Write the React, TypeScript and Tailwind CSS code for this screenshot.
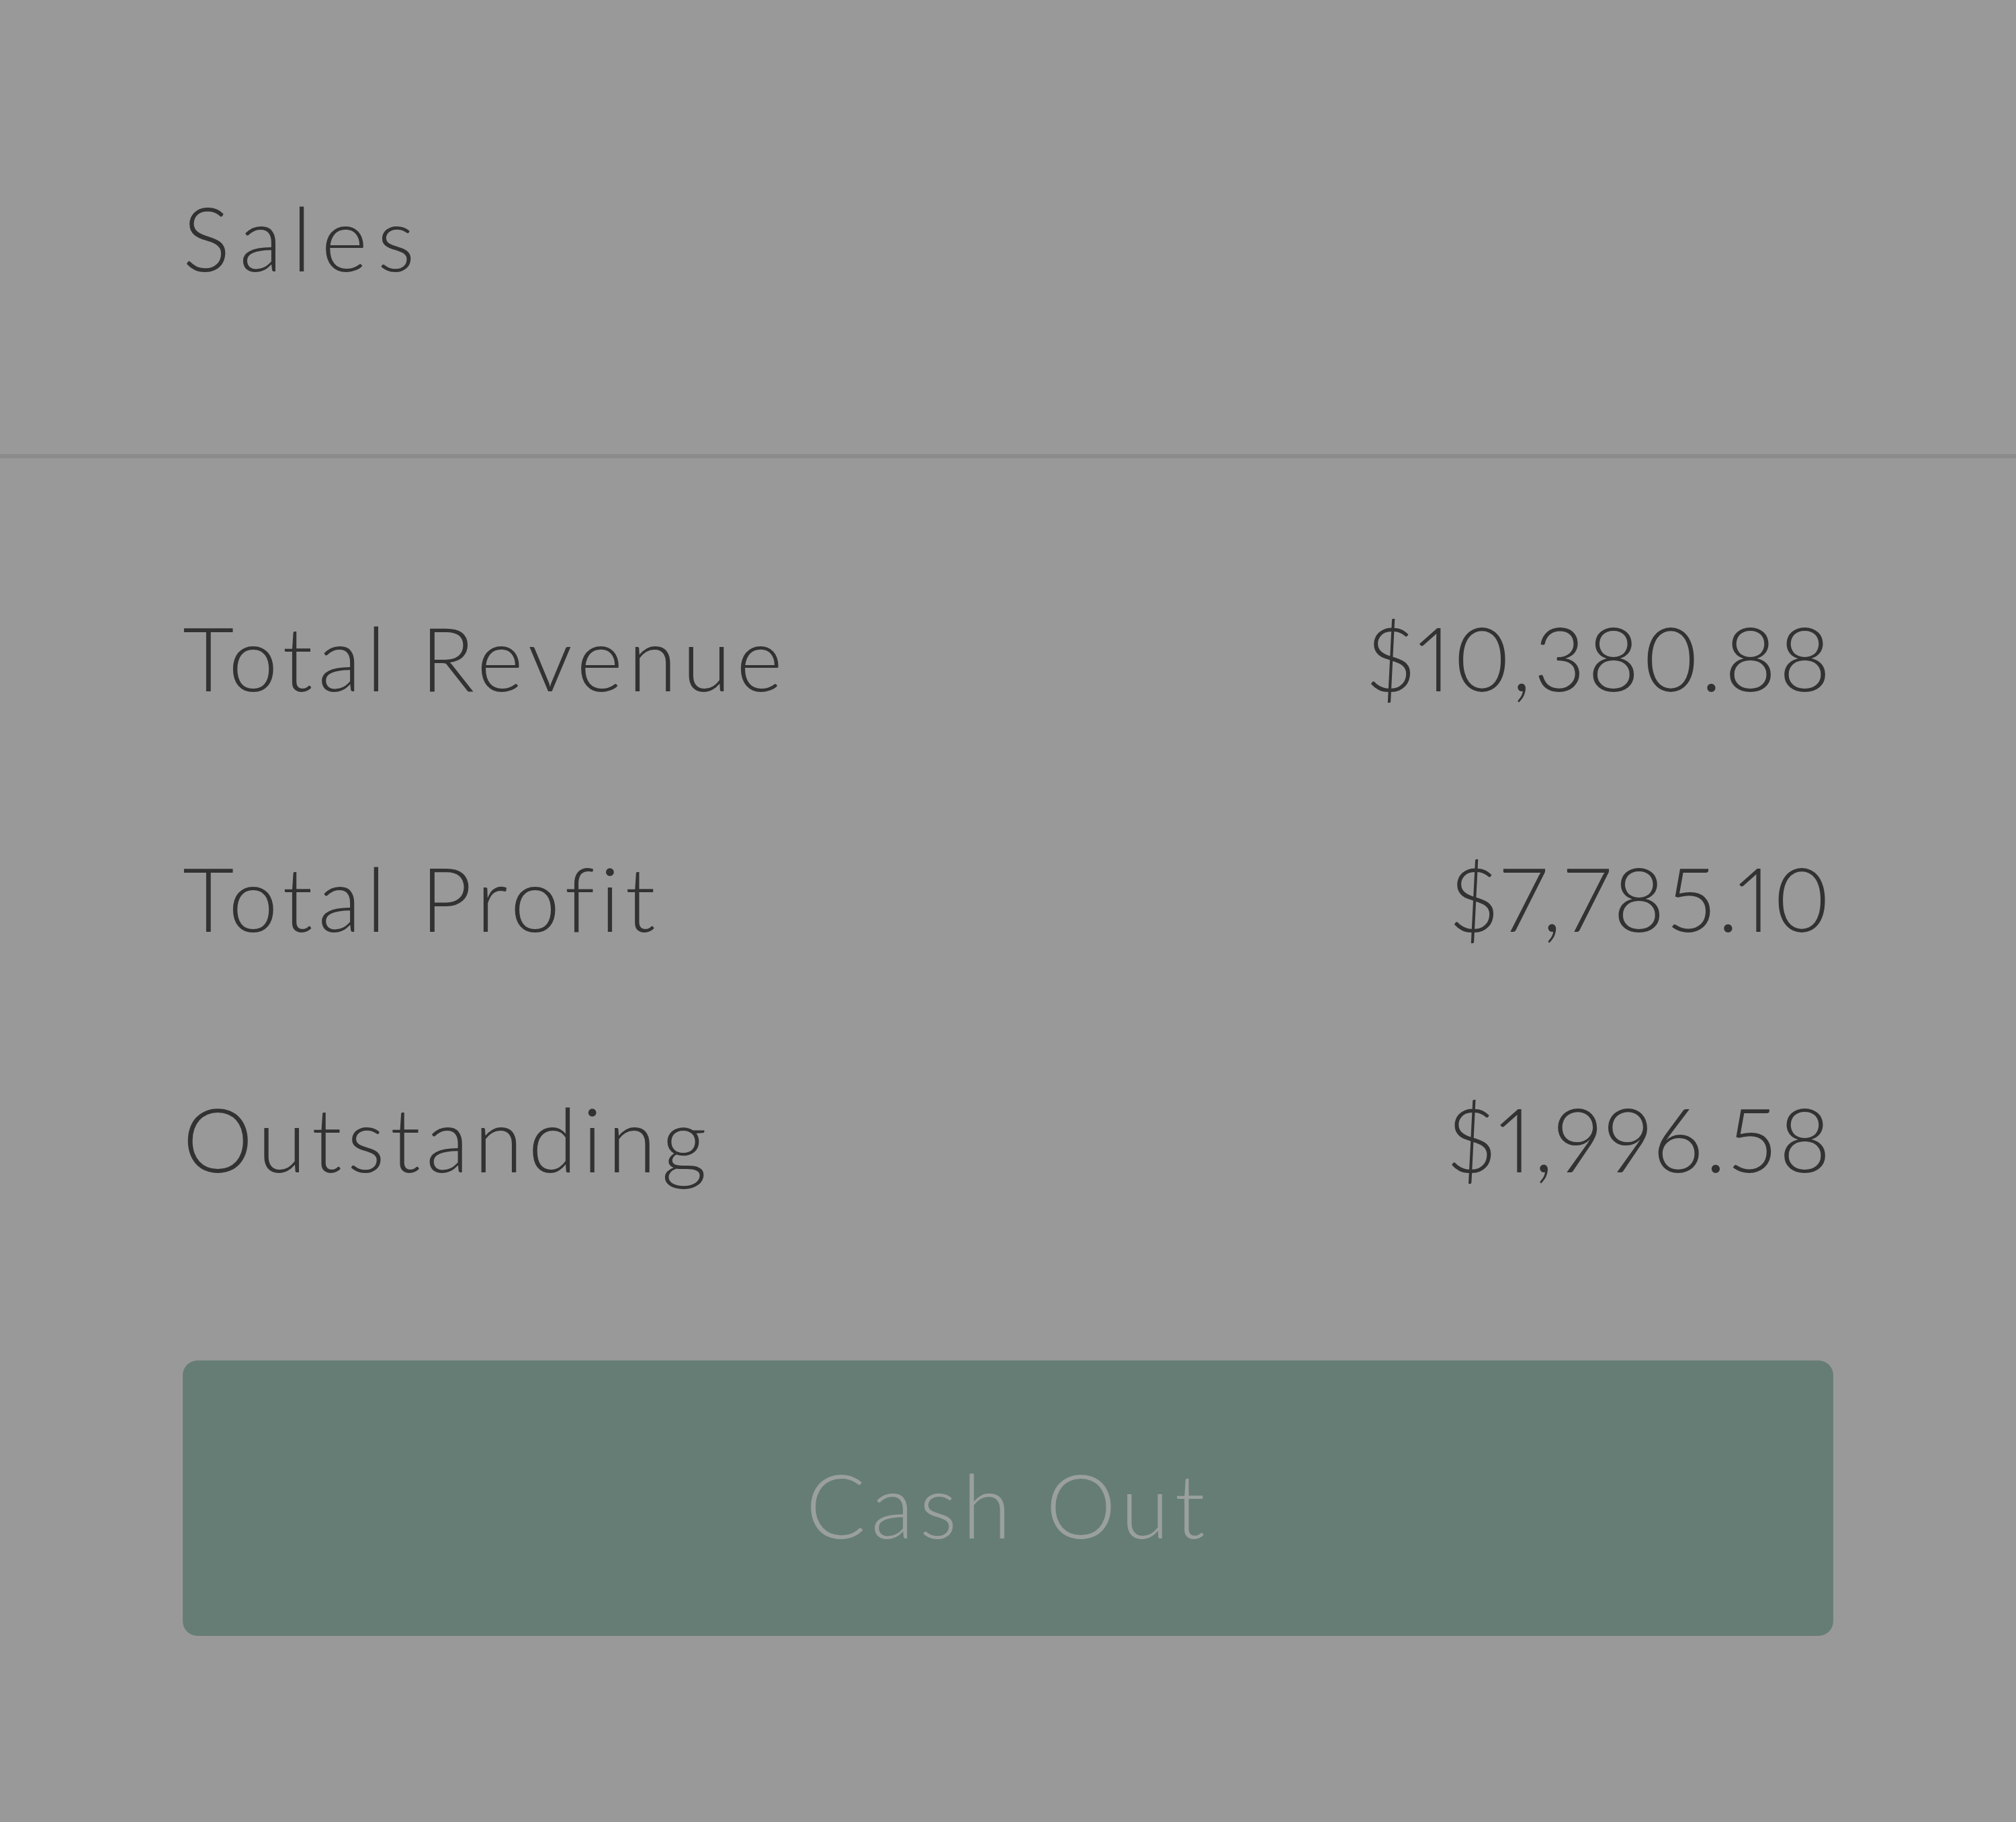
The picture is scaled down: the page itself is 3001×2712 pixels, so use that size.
import React from "react";

const rows = [
  { label: "Total Revenue", value: "$10,380.88" },
  { label: "Total Profit", value: "$7,785.10" },
  { label: "Outstanding", value: "$1,996.58" },
];

export default function App() {
  return (
    <div className="min-h-[2712px] w-full bg-[#999999] font-['Lato','Liberation_Sans',sans-serif] font-light text-[#323232]">
      {/* header */}
      <div className="h-[682px] border-b-[6px] border-[#8b8b8b] px-[272px] pt-[287px]">
        <h1 className="text-[132px] leading-none tracking-[0.11em]">Sales</h1>
      </div>

      {/* totals */}
      <div className="flex flex-col gap-[226px] px-[272px] pt-[230px]">
        {rows.map((r) => (
          <div key={r.label} className="flex items-center justify-between text-[132px] leading-none">
            <span className="tracking-[0.06em]">{r.label}</span>
            <span className="proportional-nums tracking-[0.03em]">{r.value}</span>
          </div>
        ))}
      </div>

      {/* button */}
      <div className="px-[272px] pt-[265px]">
        <button className="flex h-[410px] w-full items-center justify-center rounded-[22px] bg-[#667d75] pt-[18px] text-[132px] leading-none tracking-[0.06em] text-[#9aa09d]">
          Cash Out
        </button>
      </div>
    </div>
  );
}
